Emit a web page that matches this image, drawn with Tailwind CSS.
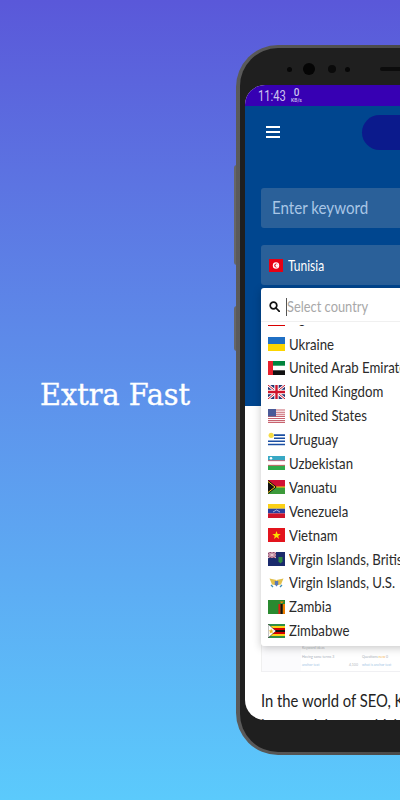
<!DOCTYPE html>
<html lang="en">
<head>
  <meta charset="UTF-8" />
  <title>Extra Fast</title>
  <script src="https://cdn.jsdelivr.net/npm/@tailwindcss/browser@4"></script>
</head>
<body class="m-0">
  <div class="relative w-[400px] h-[800px] overflow-hidden bg-gradient-to-b from-[#5a58d9] to-[#5bcafc] flex items-center">

    <!-- Caption -->
    <h1 class="ml-[40px] -mt-[10px] text-[29px] leading-none font-normal text-white whitespace-nowrap font-['DejaVu_Serif',serif] [-webkit-text-stroke:0.4px_white] origin-left scale-x-[.99]">Extra Fast</h1>

    <!-- Side buttons -->
    <div class="absolute left-[234px] top-[165px] w-[3px] h-[100px] bg-[#666] rounded-l-sm"></div>
    <div class="absolute left-[234px] top-[306px] w-[3px] h-[45px] bg-[#666] rounded-l-sm"></div>

    <!-- Phone -->
    <div class="absolute left-[236px] top-[45px] w-[320px] h-[710px] rounded-[42px] bg-gradient-to-r from-[#5a5a5a] to-[#3a3a3a] p-[3px] pl-[4px]">
      <div class="w-full h-full rounded-[38px] bg-[#1f1f1f] pt-[37px] pb-[32px] pl-[5px] relative">
        <!-- Camera, sensors, speaker -->
        <div class="absolute left-[47px] top-[19px] w-[5px] h-[5px] rounded-full bg-[#070707]"></div>
        <div class="absolute left-[63px] top-[15px] w-[12px] h-[12px] rounded-full bg-[#050505]"></div>
        <div class="absolute left-[88px] top-[17px] w-[8px] h-[8px] rounded-full bg-[#0a0a0a]"></div>
        <div class="absolute left-[105px] top-[19px] w-[5px] h-[5px] rounded-full bg-[#070707]"></div>
        <div class="absolute left-[140px] top-[19px] w-[80px] h-[4px] rounded-full bg-[#0c0c0c]"></div>

        <!-- Screen -->
        <div class="relative w-full h-full rounded-[20px] overflow-hidden bg-white font-['Lato',sans-serif]">

          <!-- Status bar -->
          <div class="h-[21px] bg-[#3700b3] flex items-center pl-[13px] text-[#cdc4ee] font-['Roboto',sans-serif]">
            <span class="w-[33px] text-[14px] leading-none whitespace-nowrap origin-left scale-x-[.8]">11:43</span>
            <div class="w-[11px] flex flex-col items-center leading-none">
              <span class="text-[10px] leading-[10px] font-medium">0</span>
              <span class="text-[5px] leading-[5px] font-medium whitespace-nowrap">KB/s</span>
            </div>
          </div>

          <!-- Blue header -->
          <div class="relative h-[300px] bg-[#00468f] pt-[20px] pl-[16px]">
            <div class="flex flex-col gap-[3px] w-[14px] ml-[5px]">
              <div class="h-[2px] bg-white"></div>
              <div class="h-[2px] bg-white"></div>
              <div class="h-[2px] bg-white"></div>
            </div>
            <!-- scribbled-out logo -->
            <div class="absolute left-[117px] top-[9px] w-[70px] h-[35px] rounded-[18px] bg-[#0b1a8c]"></div>

            <div class="mt-[50px] h-[40px] rounded-[3px] bg-[#2a6099] flex items-center pl-[11px] text-[17px] text-[#a9c6e6]">
              <span class="origin-left scale-x-[.89] whitespace-nowrap">Enter keyword</span>
            </div>
            <div class="mt-[17px] h-[40px] rounded-[3px] bg-[#2a6099] flex items-center pl-[8px] gap-[5px] text-[15px] text-white">
              <svg width="14" height="13" viewBox="0 0 14 13"><rect width="14" height="13" fill="#e70013"/><circle cx="7" cy="6.5" r="3.2" fill="#fff"/><circle cx="7.2" cy="6.5" r="1.9" fill="#e70013"/><circle cx="7.9" cy="6.5" r="1.5" fill="#fff"/></svg>
              <span class="origin-left scale-x-[.8]">Tunisia</span>
            </div>
          </div>

          <!-- Article -->
          <div class="pl-[16px]">
            <div class="h-[266px] bg-white relative border-l border-[#f0f0f0]">
              <!-- blurred screenshot peeking out under the dropdown -->
              <div class="absolute left-0 right-0 bottom-0 h-[26px] bg-[#fbfbfd] border-b border-[#f0f0f3]">
                <div class="ml-[39px] h-full bg-white pl-[1px] text-[3.5px] leading-[5px] text-[#b4b9c0]">
                  <div>Keyword ideas</div>
                  <div class="mt-[4px] flex text-[#a8b0b9]"><span class="w-[60px]">Having same terms 3</span><span>Questions <span class="text-[#f4b860]">new</span> 0</span></div>
                  <div class="mt-[3px] flex text-[#a5c6e6]"><span class="w-[47px]">anchor text</span><span class="w-[13px] text-[#b4b9c0]">4,100</span><span>what is anchor text</span></div>
                </div>
              </div>
            </div>
            <p class="mt-[16px] text-[17px] leading-[25px] text-[#222] whitespace-nowrap origin-left scale-x-[.87]">In the world of SEO, Keyword research<br />is a crucial step which helps you</p>
          </div>

          <!-- Country dropdown -->
          <div class="absolute left-[16px] top-[203px] w-[270px] h-[358px] rounded-[3px] bg-white shadow-[0_2px_8px_rgba(0,0,0,0.22)] flex flex-col overflow-hidden">
            <div class="h-[34px] shrink-0 flex items-center pl-[8px] pt-[4px] border-b border-[#f0f0f0]">
              <svg width="11" height="11" viewBox="0 0 11 11" fill="none" stroke="#111" stroke-width="1.7"><circle cx="4.5" cy="4.5" r="3.3"/><path d="M7 7l3.3 3.3" stroke-linecap="round"/></svg>
              <div class="ml-[6px] w-px h-[18px] bg-[#555]"></div>
              <span class="text-[15.5px] text-[#a8a8a8] origin-left scale-x-[.83] whitespace-nowrap">Select country</span>
            </div>
            <div class="flex-1 min-h-0 pt-[3px] flex flex-col">
              <div class="flex-1 min-h-0 overflow-hidden text-[15px] text-[#2b2b2b] whitespace-nowrap">
                <div class="-mt-[17px]">
                  <div class="h-[23.9px] flex items-center pl-[7px] gap-[4px]">
                    <svg class="-translate-y-[1px]" width="17" height="14" viewBox="0 0 17 14"><rect width="17" height="14" fill="#000"/><rect y="4.7" width="17" height="2.3" fill="#fcdc04"/><rect y="7" width="17" height="2.3" fill="#d90000"/><rect y="12.4" width="17" height="1.6" fill="#d90000"/></svg>
                    <span class="origin-left scale-x-[.88] -translate-y-[3px]">Uganda</span>
                  </div>
                  <div class="h-[23.9px] flex items-center pl-[7px] gap-[4px]">
                    <svg width="17" height="14" viewBox="0 0 17 14"><rect width="17" height="7" fill="#1f6fc4"/><rect y="7" width="17" height="7" fill="#fcd500"/></svg>
                    <span class="origin-left scale-x-[.88]">Ukraine</span>
                  </div>
                  <div class="h-[23.9px] flex items-center pl-[7px] gap-[4px]">
                    <svg width="17" height="14" viewBox="0 0 17 14"><rect width="17" height="14" fill="#fff"/><rect width="17" height="4.7" fill="#00843d"/><rect y="9.3" width="17" height="4.7" fill="#111"/><rect width="5" height="14" fill="#e8212e"/></svg>
                    <span class="origin-left scale-x-[.88]">United Arab Emirates</span>
                  </div>
                  <div class="h-[23.9px] flex items-center pl-[7px] gap-[4px]">
                    <svg width="17" height="14" viewBox="0 0 17 14"><rect width="17" height="14" fill="#24336f"/><path d="M0 0l17 14M17 0L0 14" stroke="#fff" stroke-width="2.8"/><path d="M0 0l17 14M17 0L0 14" stroke="#cf142b" stroke-width="1"/><path d="M8.5 0v14M0 7h17" stroke="#fff" stroke-width="4.4"/><path d="M8.5 0v14M0 7h17" stroke="#cf142b" stroke-width="2.4"/></svg>
                    <span class="origin-left scale-x-[.88]">United Kingdom</span>
                  </div>
                  <div class="h-[23.9px] flex items-center pl-[7px] gap-[4px]">
                    <svg width="17" height="14" viewBox="0 0 17 14"><rect width="17" height="14" fill="#fff"/><path d="M0 1h17M0 3.2h17M0 5.3h17M0 7.4h17M0 9.5h17M0 11.6h17M0 13.5h17" stroke="#c8636f" stroke-width="1.1"/><rect width="8" height="7.4" fill="#4a5a98"/></svg>
                    <span class="origin-left scale-x-[.88]">United States</span>
                  </div>
                  <div class="h-[23.9px] flex items-center pl-[7px] gap-[4px]">
                    <svg width="17" height="14" viewBox="0 0 17 14"><rect width="17" height="14" fill="#fff"/><path d="M6 3.1h11M6 6.2h11M0 9.3h17M0 12.5h17" stroke="#1b4fa3" stroke-width="1.6"/><circle cx="3.2" cy="3.3" r="2.6" fill="#f6dc45"/></svg>
                    <span class="origin-left scale-x-[.88]">Uruguay</span>
                  </div>
                  <div class="h-[23.9px] flex items-center pl-[7px] gap-[4px]">
                    <svg width="17" height="14" viewBox="0 0 17 14"><rect width="17" height="14" fill="#fff"/><rect width="17" height="4.5" fill="#38a8c4"/><rect y="9.5" width="17" height="4.5" fill="#2eaa4a"/><rect y="4.5" width="17" height=".6" fill="#ce1126"/><rect y="8.9" width="17" height=".6" fill="#ce1126"/><circle cx="3" cy="2.2" r="1.3" fill="#fff"/></svg>
                    <span class="origin-left scale-x-[.88]">Uzbekistan</span>
                  </div>
                  <div class="h-[23.9px] flex items-center pl-[7px] gap-[4px]">
                    <svg width="17" height="14" viewBox="0 0 17 14"><rect width="17" height="7" fill="#d21034"/><rect y="7" width="17" height="7" fill="#3c9a3a"/><path d="M0 0l9 7-9 7z" fill="#111"/><path d="M0 1.5L7 7l-7 5.5M8 7h9" fill="none" stroke="#fdce12" stroke-width="1"/></svg>
                    <span class="origin-left scale-x-[.88]">Vanuatu</span>
                  </div>
                  <div class="h-[23.9px] flex items-center pl-[7px] gap-[4px]">
                    <svg width="17" height="14" viewBox="0 0 17 14"><rect width="17" height="4.7" fill="#fcd116"/><rect y="4.7" width="17" height="4.7" fill="#2a3f9e"/><rect y="9.4" width="17" height="4.6" fill="#cf142b"/><path d="M5 8l3.5-2L12 8" fill="none" stroke="#dfe6f5" stroke-width=".7"/></svg>
                    <span class="origin-left scale-x-[.88]">Venezuela</span>
                  </div>
                  <div class="h-[23.9px] flex items-center pl-[7px] gap-[4px]">
                    <svg width="17" height="14" viewBox="0 0 17 14"><rect width="17" height="14" fill="#e3141d"/><path d="M8.5 3l1.1 3h3.1l-2.5 1.9.9 3-2.6-1.8-2.6 1.8.9-3-2.5-1.9h3.1z" fill="#fbe000"/></svg>
                    <span class="origin-left scale-x-[.88]">Vietnam</span>
                  </div>
                  <div class="h-[23.9px] flex items-center pl-[7px] gap-[4px]">
                    <svg width="17" height="14" viewBox="0 0 17 14"><rect width="17" height="14" fill="#1a2a6c"/><rect width="8" height="6" fill="#8f4a6e"/><path d="M0 0l8 6M8 0L0 6M4 0v6M0 3h8" stroke="#e9c8cf" stroke-width="1"/><path d="M10.5 5h4v4.5l-2 2-2-2z" fill="#2f8a3f"/></svg>
                    <span class="origin-left scale-x-[.88]">Virgin Islands, British</span>
                  </div>
                  <div class="h-[23.9px] flex items-center pl-[7px] gap-[4px]">
                    <svg width="17" height="14" viewBox="0 0 17 14"><rect width="17" height="14" fill="#fff"/><path d="M8.5 4L1.5 2.5 3 6l1 2.5 3 .5zM8.5 4l7-1.5L14 6l-1 2.5-3 .5z" fill="#e2c04c"/><path d="M6.8 5h3.4v3.6L8.5 10.5 6.8 8.6z" fill="#5878b8"/><path d="M3 9l2 2M14 9l-2 2" stroke="#3c8fb8" stroke-width="1.3"/></svg>
                    <span class="origin-left scale-x-[.88]">Virgin Islands, U.S.</span>
                  </div>
                  <div class="h-[23.9px] flex items-center pl-[7px] gap-[4px]">
                    <svg width="17" height="14" viewBox="0 0 17 14"><rect width="17" height="14" fill="#2a8a30"/><rect x="10.4" y="4" width="2.2" height="10" fill="#de2010"/><rect x="12.6" y="4" width="2.2" height="10" fill="#111"/><rect x="14.8" y="4" width="2.2" height="10" fill="#ef7d00"/><path d="M11.5 1.5h4.5L13.7 3.5z" fill="#ef7d00"/></svg>
                    <span class="origin-left scale-x-[.88]">Zambia</span>
                  </div>
                  <div class="h-[23.9px] flex items-center pl-[7px] gap-[4px]">
                    <svg width="17" height="14" viewBox="0 0 17 14"><rect width="17" height="14" fill="#fff"/><rect y="0" width="17" height="2" fill="#2f8f46"/><rect y="2" width="17" height="2" fill="#fcd116"/><rect y="4" width="17" height="2" fill="#d40000"/><rect y="6" width="17" height="2" fill="#111"/><rect y="8" width="17" height="2" fill="#d40000"/><rect y="10" width="17" height="2" fill="#fcd116"/><rect y="12" width="17" height="2" fill="#2f8f46"/><path d="M0 0l8 7-8 7z" fill="#fff" stroke="#111" stroke-width=".5"/><path d="M3.2 4.5l.8 2h1.8L4.3 7.8l.6 2-1.7-1.2-1.7 1.2.6-2L.6 6.5h1.8z" fill="#e9b820"/></svg>
                    <span class="origin-left scale-x-[.88]">Zimbabwe</span>
                  </div>
                </div>
              </div>
            </div>
          </div>
        </div>
      </div>
    </div>
  </div>
</body>
</html>
